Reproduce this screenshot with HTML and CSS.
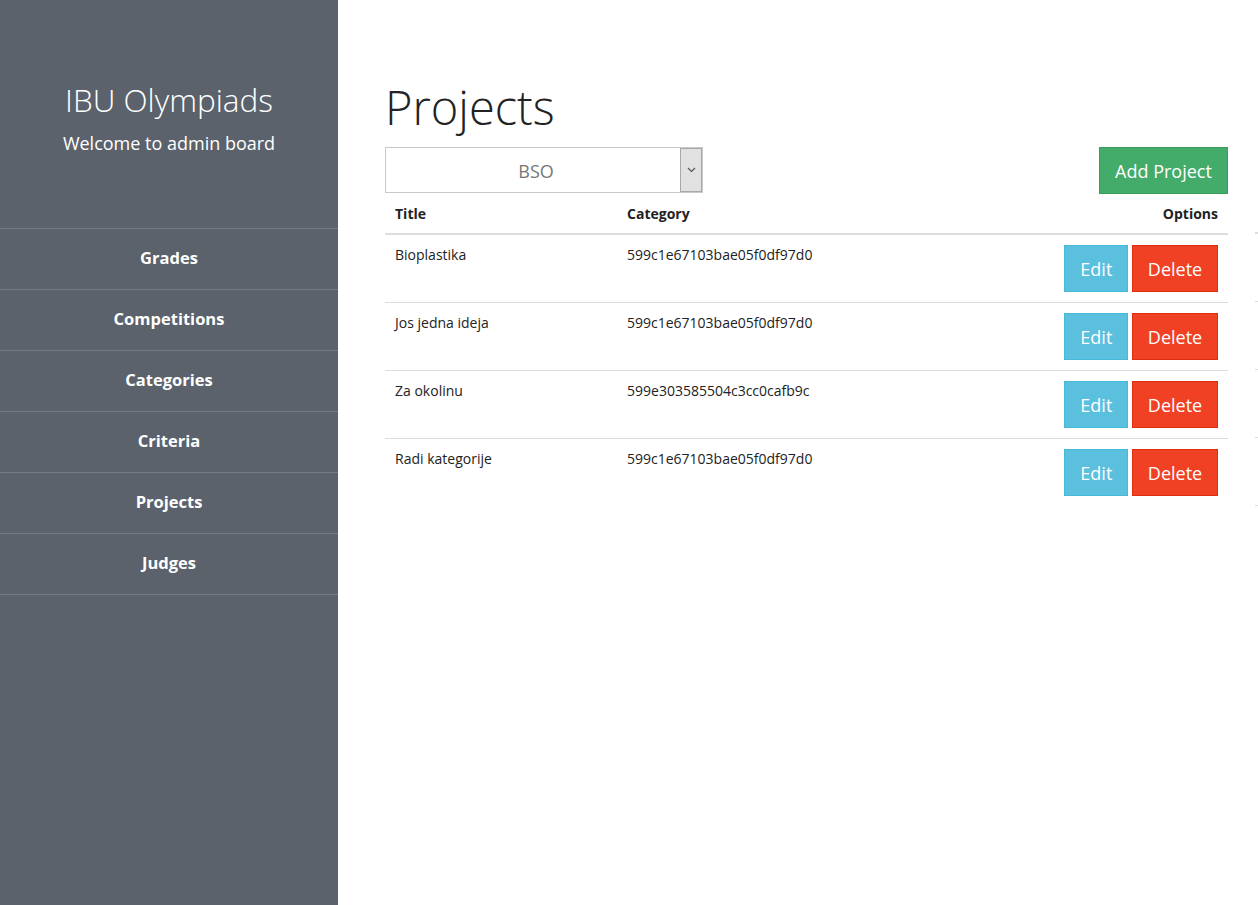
FILE: index.html
```html
<!DOCTYPE html>
<html>
<head>
<meta charset="utf-8">
<title>Projects</title>
<link rel="stylesheet" href="styles.css">
</head>
<body>
<div class="layout">
  <aside class="sidebar">
    <div class="brand">
      <h2 class="brand-title">IBU Olympiads</h2>
      <p class="brand-sub">Welcome to admin board</p>
    </div>
    <nav class="nav">
      <a class="nav-item">Grades</a>
      <a class="nav-item">Competitions</a>
      <a class="nav-item">Categories</a>
      <a class="nav-item">Criteria</a>
      <a class="nav-item">Projects</a>
      <a class="nav-item">Judges</a>
    </nav>
  </aside>
  <main class="main">
    <h1 class="page-title">Projects</h1>
    <div class="tables">
      <div class="panel">
        <div class="toolbar">
          <div class="select">
            <span class="select-value">BSO</span>
            <span class="select-arrow">
              <svg width="9" height="6" viewBox="0 0 9 6"><path d="M1 1l3.5 3.5L8 1" fill="none" stroke="#555" stroke-width="1.2"/></svg>
            </span>
          </div>
          <button class="btn btn-success">Add Project</button>
        </div>
        <table class="table">
          <thead>
            <tr><th class="col-title">Title</th><th class="col-cat">Category</th><th class="col-opt">Options</th></tr>
          </thead>
          <tbody>
            <tr><td>Bioplastika</td><td>599c1e67103bae05f0df97d0</td><td class="col-opt"><button class="btn btn-info">Edit</button> <button class="btn btn-alert">Delete</button></td></tr>
            <tr><td>Jos jedna ideja</td><td>599c1e67103bae05f0df97d0</td><td class="col-opt"><button class="btn btn-info">Edit</button> <button class="btn btn-alert">Delete</button></td></tr>
            <tr><td>Za okolinu</td><td>599e303585504c3cc0cafb9c</td><td class="col-opt"><button class="btn btn-info">Edit</button> <button class="btn btn-alert">Delete</button></td></tr>
            <tr><td>Radi kategorije</td><td>599c1e67103bae05f0df97d0</td><td class="col-opt"><button class="btn btn-info">Edit</button> <button class="btn btn-alert">Delete</button></td></tr>
          </tbody>
        </table>
      </div>
      <div class="ghost">
        <div class="ghost-head"></div>
        <div class="ghost-row"></div>
        <div class="ghost-row"></div>
        <div class="ghost-row"></div>
        <div class="ghost-row"></div>
      </div>
    </div>
  </main>
</div>
</body>
</html>
```

FILE: styles.css
```css
html, body {
  margin: 0;
  padding: 0;
  height: 100%;
  overflow: hidden;
  background: #fff;
  font-family: "Open Sans", "Liberation Sans", sans-serif;
  color: #222;
}

.layout {
  display: flex;
  width: 1258px;
  height: 905px;
  overflow: hidden;
}

.sidebar {
  flex: 0 0 338px;
  background: #5b626b;
  color: #fff;
  height: 905px;
}

.brand {
  height: 228px;
  box-sizing: border-box;
  padding-top: 78px;
  text-align: center;
}

.brand-title {
  margin: 0;
  font-weight: 300;
  font-size: 31.5px;
  line-height: 44px;
  color: #fff;
}

.brand-sub {
  margin: 9px 0 0;
  font-size: 18px;
  line-height: 24px;
  color: #fff;
}

.nav {
  display: flex;
  flex-direction: column;
  border-top: 1px solid #737a82;
}

.nav-item {
  display: block;
  height: 60px;
  line-height: 58px;
  border-bottom: 1px solid #737a82;
  text-align: center;
  font-weight: 700;
  font-size: 16.5px;
  color: #fff;
}

.main {
  flex: 0 0 auto;
  width: 920px;
  padding-left: 47px;
  padding-top: 78px;
  box-sizing: border-box;
}

.page-title {
  margin: 0;
  font-weight: 300;
  font-size: 47px;
  line-height: 58px;
  color: #222;
  height: 69px;
}

.tables {
  display: flex;
  gap: 27px;
}

.panel {
  width: 843px;
  flex: 0 0 843px;
}

.toolbar {
  display: flex;
  justify-content: space-between;
  align-items: flex-start;
}

.select {
  width: 318px;
  height: 46px;
  box-sizing: border-box;
  border: 1px solid #c9c9c9;
  background: #fff;
  display: flex;
}

.select-value {
  flex: 1;
  text-align: center;
  font-size: 18px;
  line-height: 46px;
  color: #777;
  padding-left: 6px;
}

.select-arrow {
  width: 20px;
  background: #e1e1e1;
  border: 1px solid #a8a8a8;
  display: flex;
  align-items: center;
  justify-content: center;
}

.btn {
  font-family: "Open Sans", "Liberation Sans", sans-serif;
  font-size: 18px;
  color: #fff;
  height: 47px;
  line-height: 46px;
  padding: 0;
  border: 1px solid;
  box-sizing: border-box;
  cursor: pointer;
  margin: 0;
  vertical-align: top;
}

.btn-success {
  background: #43ac6a;
  border-color: #3a9d5d;
  width: 129px;
}

.btn-info {
  background: #5bc0de;
  border-color: #46b8da;
  width: 64px;
}

.btn-alert {
  background: #f04124;
  border-color: #de2d0f;
  width: 86px;
}

.table {
  width: 843px;
  border-collapse: collapse;
  font-size: 14px;
}

.table th {
  font-weight: 700;
  text-align: left;
  padding: 9px 10px 8px;
  line-height: 22px;
  border-bottom: 2px solid #dddddd;
}

.table td {
  padding: 10px 10px 10px;
  line-height: 20px;
  vertical-align: top;
  border-bottom: 1px solid #dddddd;
}

.table tbody tr:last-child td {
  border-bottom: none;
}

.col-title { width: 212px; }
.col-cat { width: 280px; }
.table .col-opt { text-align: right; white-space: nowrap; }

.ghost {
  width: 100px;
  flex: 0 0 100px;
  padding-top: 46px;
}

.ghost-head {
  height: 39px;
  border-bottom: 2px solid #dddddd;
}

.ghost-row {
  height: 67px;
  border-bottom: 1px solid #dddddd;
}
```
